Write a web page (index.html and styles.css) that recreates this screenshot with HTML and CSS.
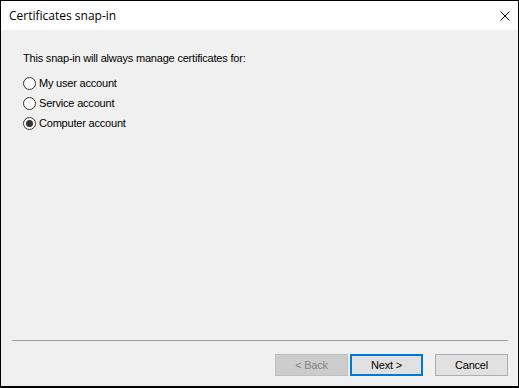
FILE: index.html
```html
<!DOCTYPE html>
<html>
<head>
<meta charset="utf-8">
<link rel="stylesheet" href="styles.css">
</head>
<body>
<div class="window">
  <div class="titlebar">
    <span class="title">Certificates snap-in</span>
    <svg class="close" width="10" height="10" viewBox="0 0 10 10"><path d="M0.5 0.5 L9.5 9.5 M9.5 0.5 L0.5 9.5" stroke="#000" stroke-width="1" fill="none"/></svg>
  </div>
  <div class="content">
    <p class="prompt">This snap-in will always manage certificates for:</p>
    <div class="options">
      <label class="option"><span class="radio"></span><span>My user account</span></label>
      <label class="option"><span class="radio"></span><span>Service account</span></label>
      <label class="option"><span class="radio checked"></span><span>Computer account</span></label>
    </div>
  </div>
  <div class="footer">
    <div class="separator"></div>
    <div class="buttons">
      <div class="btn disabled">&lt; Back</div>
      <div class="btn default">Next &gt;</div>
      <div class="btn cancel">Cancel</div>
    </div>
  </div>
</div>
</body>
</html>
```

FILE: styles.css
```css
html, body {
  margin: 0;
  padding: 0;
}
body {
  font-family: "Liberation Sans", Arial, sans-serif;
  font-size: 11px;
  letter-spacing: -0.2px;
  color: #000;
}
.window {
  width: 519px;
  height: 388px;
  box-sizing: border-box;
  border: 1px solid #000;
  border-bottom-width: 2px;
  display: flex;
  flex-direction: column;
  background: #f0f0f0;
}
.titlebar {
  height: 29px;
  background: #fff;
  display: flex;
  align-items: center;
  justify-content: space-between;
  padding: 0 8px 0 8px;
}
.title {
  font-family: "Open Sans", "Noto Sans", sans-serif;
  font-size: 12px;
  letter-spacing: 0;
  color: #000;
}
.close {
  display: block;
  margin-top: 1px;
}
.content {
  flex: 1;
  padding: 22px 22px 0 22px;
}
.prompt {
  margin: 0;
  line-height: 13px;
}
.options {
  margin-top: 12px;
  display: flex;
  flex-direction: column;
  gap: 7px;
}
.option {
  display: flex;
  align-items: center;
  height: 13px;
  line-height: 13px;
}
.radio {
  width: 13px;
  height: 13px;
  box-sizing: border-box;
  border: 1px solid #333;
  border-radius: 50%;
  background: #fff;
  margin-right: 3px;
  display: flex;
  align-items: center;
  justify-content: center;
}
.radio.checked::after {
  content: "";
  width: 7px;
  height: 7px;
  border-radius: 50%;
  background: #333;
}
.footer {
  padding: 0 10px 10px 11px;
}
.separator {
  height: 1px;
  background: #a0a0a0;
}
.buttons {
  margin-top: 13px;
  display: flex;
  justify-content: flex-end;
}
.btn {
  width: 73px;
  height: 22px;
  box-sizing: border-box;
  border: 1px solid #adadad;
  background: #e1e1e1;
  display: flex;
  align-items: center;
  justify-content: center;
}
.btn.disabled {
  background: #cccccc;
  border-color: #bfbfbf;
  color: #838383;
}
.btn.default {
  border: 2px solid #0078d7;
  margin-left: 2px;
}
.btn.cancel {
  margin-left: 12px;
}
```
